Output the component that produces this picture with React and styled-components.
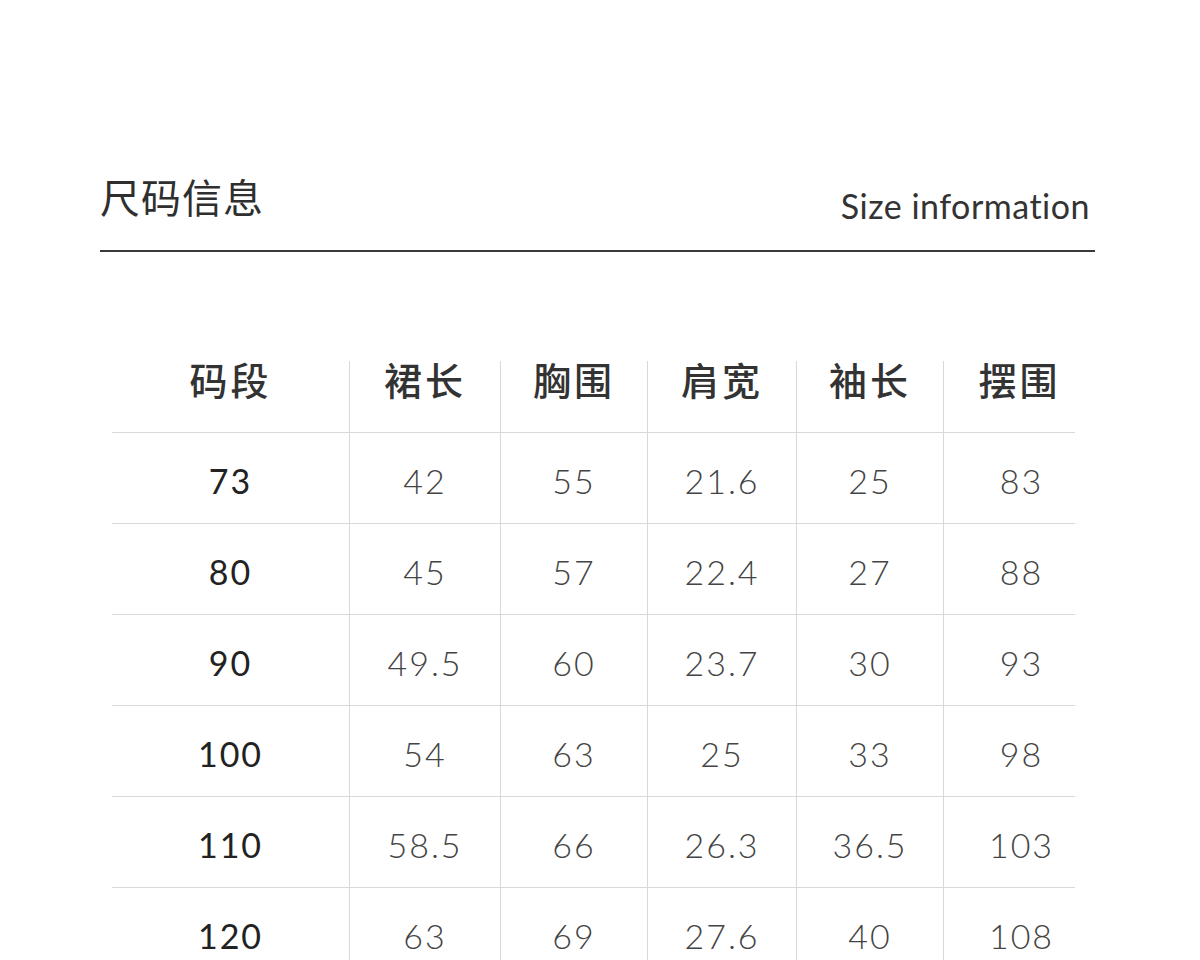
import React from 'react';
import styled, { createGlobalStyle } from 'styled-components';

const GlobalStyle = createGlobalStyle`
  html, body {
    margin: 0;
    padding: 0;
    background: #ffffff;
  }
  body {
    font-family: Lato, "Noto Sans", "Noto Sans CJK SC", sans-serif;
    color: #333;
  }
`;

const Page = styled.div`
  width: 1200px;
  padding: 170px 105px 0 100px;
  box-sizing: border-box;
`;

const TitleBar = styled.div`
  display: flex;
  align-items: flex-end;
  justify-content: space-between;
  padding-bottom: 28px;
  border-bottom: 2px solid #3a3a36;
`;

const Title = styled.h1`
  margin: 0;
  font-family: "Noto Sans CJK SC", sans-serif;
  font-weight: 400;
  font-size: 40px;
  line-height: 52px;
  letter-spacing: 1px;
  color: #2f2f2f;
`;

const Subtitle = styled.span`
  font-family: Lato, "Noto Sans", sans-serif;
  font-size: 34px;
  line-height: 40px;
  letter-spacing: 0.5px;
  color: #333;
  margin-right: 5px;
  margin-bottom: -4px;
`;

const Table = styled.div`
  display: grid;
  grid-template-columns: 237px 151px 147px 149px 147px 132px;
  margin: 109px 20px 0 12px;
`;

const HeadCell = styled.div`
  height: 72px;
  display: flex;
  align-items: center;
  justify-content: center;
  font-family: "Noto Sans CJK SC", sans-serif;
  font-weight: 500;
  font-size: 38px;
  letter-spacing: 3px;
  color: #333;
  padding-bottom: 36px;
  padding-left: ${p => (p.$last ? '20px' : '0')};
  box-sizing: border-box;
  border-bottom: 1px solid #d9d9d9;
  border-left: ${p => (p.$first ? 'none' : '1px solid #d9d9d9')};
`;

const Cell = styled.div`
  height: 91px;
  display: flex;
  align-items: center;
  justify-content: center;
  font-family: Lato, "Noto Sans", sans-serif;
  font-size: 34px;
  letter-spacing: 2px;
  font-weight: ${p => (p.$first ? 400 : 300)};
  color: ${p => (p.$first ? '#222' : '#444')};
  padding-top: 4px;
  padding-left: ${p => (p.$last ? '24px' : '0')};
  box-sizing: border-box;
  border-bottom: 1px solid #d9d9d9;
  border-left: ${p => (p.$first ? 'none' : '1px solid #d9d9d9')};
`;

const headers = ['码段', '裙长', '胸围', '肩宽', '袖长', '摆围'];

const rows = [
  ['73', '42', '55', '21.6', '25', '83'],
  ['80', '45', '57', '22.4', '27', '88'],
  ['90', '49.5', '60', '23.7', '30', '93'],
  ['100', '54', '63', '25', '33', '98'],
  ['110', '58.5', '66', '26.3', '36.5', '103'],
  ['120', '63', '69', '27.6', '40', '108'],
];

export default function App() {
  const last = headers.length - 1;
  return (
    <>
      <GlobalStyle />
      <Page>
        <TitleBar>
          <Title>尺码信息</Title>
          <Subtitle>Size information</Subtitle>
        </TitleBar>
        <Table>
          {headers.map((h, i) => (
            <HeadCell key={h} $first={i === 0} $last={i === last}>{h}</HeadCell>
          ))}
          {rows.map(row =>
            row.map((v, i) => (
              <Cell key={row[0] + '-' + i} $first={i === 0} $last={i === last}>{v}</Cell>
            ))
          )}
        </Table>
      </Page>
    </>
  );
}
